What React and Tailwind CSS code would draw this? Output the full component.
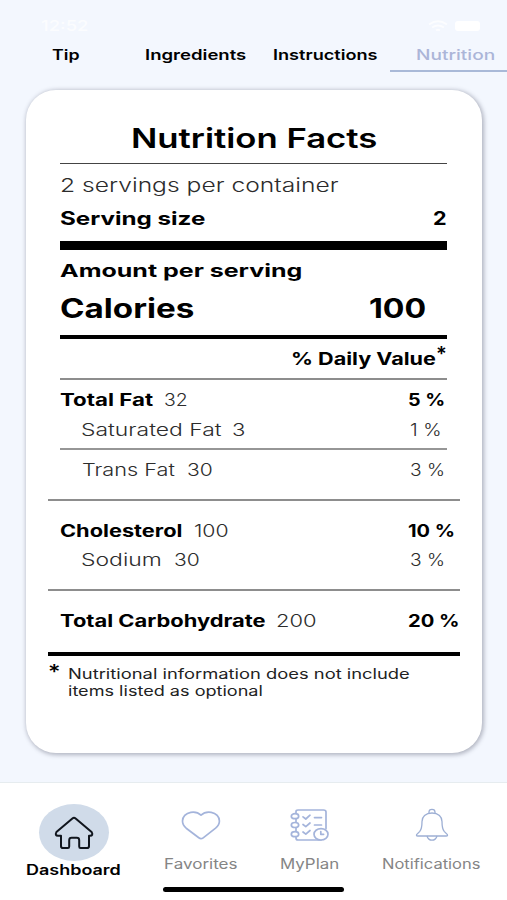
import { useLayoutEffect, useRef, useState } from "react";

// Stretches a single line of text horizontally to fill the width of its box.
function Fit({ children, className = "" }) {
  const box = useRef(null);
  const text = useRef(null);
  const [scale, setScale] = useState(1);
  useLayoutEffect(() => {
    setScale(box.current.clientWidth / text.current.offsetWidth);
  }, [children]);
  return (
    <span ref={box} className={`block shrink-0 whitespace-nowrap ${className}`}>
      <span ref={text} className="inline-block origin-left" style={{ transform: `scaleX(${scale})` }}>
        {children}
      </span>
    </span>
  );
}

function Row({ className, label, amount, value }) {
  return (
    <div className={`ml-[34px] flex w-[410px] text-[17px] ${className}`}>
      <div className="flex w-[347.5px] shrink-0">
        {label}
        {amount}
      </div>
      {value}
    </div>
  );
}

function HomeIcon() {
  return (
    <svg width="40" height="35" viewBox="0 0 40 35" fill="none" stroke="#10151d" strokeWidth="2" strokeLinejoin="round" strokeLinecap="round">
      <path d="M18.4 3.4Q20 2 21.6 3.4L37.6 17.1Q39.6 20.6 36 20.7H35V31.2Q35 33 33 33H26.6Q25.2 33 25.2 31.5V25.2Q25.2 22.8 22.8 22.8H17.6Q15.2 22.8 15.2 25.2V31.5Q15.2 33 13.8 33H9Q7 33 7 31.2V20.7H4Q.6 20.6 2.4 17.1Z" />
    </svg>
  );
}

function HeartIcon() {
  return (
    <svg width="40" height="30" viewBox="0 0 40 30" fill="none" stroke="#a4b4db" strokeWidth="1.7" strokeLinejoin="round">
      <path d="M20 5.2C17.2 2.4 13.4 1.7 9.8 2.3C4.8 3.1 1.5 6.8 1.5 11C1.5 13.8 2.8 16.2 5.2 18.2L17.8 27.8Q20 29.5 22.2 27.8L34.6 18.2C37 16.2 38.4 13.8 38.4 11C38.4 6.8 35.2 3.1 30.2 2.3C26.6 1.7 22.8 2.4 20 5.2Z" />
    </svg>
  );
}

function PlanIcon() {
  return (
    <svg width="40" height="34" viewBox="0 0 40 34" fill="none" stroke="#a4b4db" strokeWidth="1.7" strokeLinecap="round" strokeLinejoin="round">
      <path d="M6 5V3.5Q6 2 8 2H33.5Q36 2 36 4V20.5M6 11V14M6 20V23M6 29V30Q6 32 8 32H31" />
      <ellipse cx="5" cy="8.2" rx="3.7" ry="2.5" />
      <ellipse cx="5" cy="17" rx="3.7" ry="2.5" />
      <ellipse cx="5" cy="26.2" rx="3.7" ry="2.5" />
      <path d="M13 8.8L15.8 11L20 7.2M13 16.5L15.8 18.7L20 15M13 24L15.8 26.2L20 22.5M24.5 9.6H31.5M24.5 17H31.5" />
      <ellipse cx="31" cy="26.3" rx="7" ry="5.7" fill="white" />
      <path d="M30.8 23.6V26.3H33.6" />
    </svg>
  );
}

function BellIcon() {
  return (
    <svg width="34" height="34" viewBox="0 0 34 34" fill="none" stroke="#9dafd4" strokeWidth="1.3" strokeLinejoin="round">
      <path d="M14 5.4V4Q14 1.3 17 1.3Q20 1.3 20 4V5.4" />
      <path d="M17 5C10.5 5 7 8.8 7 13.5C7 18.5 6.6 21.3 4.8 23.4L1.8 26.4Q.8 28 2.8 28H31.2Q33.2 28 32.2 26.4L29.2 23.4C27.4 21.3 27 18.5 27 13.5C27 8.8 23.5 5 17 5Z" />
      <path d="M12 28Q13.2 32.2 17 32.2Q20.8 32.2 22 28" />
    </svg>
  );
}

function NavItem({ icon, children }) {
  return (
    <div className="flex flex-col items-center text-[14px] text-[#858585]">
      <div className="flex h-[72px] items-center pt-[12px]">{icon}</div>
      <div className="leading-[18px]">{children}</div>
    </div>
  );
}

export default function App() {
  return (
    <div className="flex h-[900px] w-[507px] flex-col overflow-hidden bg-[#f3f7fe] font-['Inter','Liberation_Sans',sans-serif] text-black">
      <header className="h-[90px] shrink-0">
        <div className="flex h-[37px] items-end justify-between pr-[27px] pl-[41px] text-white">
          <Fit className="w-[48px] text-[15px] leading-[23px] font-medium text-white/70">12:52</Fit>
          <div className="flex h-[22px] items-center gap-[7px]">
            <svg width="20" height="12" viewBox="0 0 20 12" fill="none" stroke="white" strokeOpacity=".7" strokeWidth="2">
              <path d="M1 4.5Q10-2 19 4.5M4 7.5Q10 3.5 16 7.5M8 10.5Q10 9 12 10.5" />
            </svg>
            <div className="h-[10px] w-[25px] rounded-[3px] bg-white" />
          </div>
        </div>
        <nav className="flex h-[35px] pl-[52px] text-[14.5px] leading-[35px] font-semibold">
          <Fit className="w-[27px]">Tip</Fit>
          <Fit className="ml-[66px] w-[101px]">Ingredients</Fit>
          <Fit className="ml-[27px] w-[105px]">Instructions</Fit>
          <div className="ml-[12px] w-[117px] border-b-2 border-[#a9b9d8] pl-[26px] font-medium text-[#abb5d8]">
            <Fit className="w-[79px]">Nutrition</Fit>
          </div>
        </nav>
      </header>

      <main className="ml-[26px] h-[663px] w-[456px] shrink-0 rounded-[30px] bg-white pt-[21px] shadow-[1px_1px_4px_1px_rgba(60,65,85,0.36)]">
        <div className="ml-[34px] w-[387px]">
          <h1 className="flex h-[52px] justify-center text-[27.5px] leading-[54px] font-semibold">
            <Fit className="w-[246px]">Nutrition Facts</Fit>
          </h1>
          <div className="h-px bg-[#444]" />
          <Fit className="mt-[5px] w-[278px] text-[18.5px] leading-[33px] font-[350] text-[#2c2c2c]">2 servings per container</Fit>
          <div className="flex justify-between text-[18.5px] leading-[32px] font-bold">
            <Fit className="w-[145px]">Serving size</Fit>
            <Fit className="w-[14px]">2</Fit>
          </div>
          <div className="mt-[7px] h-[9px] bg-black" />
          <Fit className="mt-[5px] w-[243px] text-[18px] leading-[32px] font-bold">Amount per serving</Fit>
          <div className="flex h-[41px] justify-between pr-[21px] text-[26.5px] leading-[42px] font-bold">
            <Fit className="w-[134px]">Calories</Fit>
            <Fit className="w-[57px]">100</Fit>
          </div>
          <div className="mt-[7px] h-1 bg-black" />
          <div className="mt-[5px] flex h-[30px] justify-end text-[17px] leading-[31px] font-bold">
            <Fit className="w-[145px]">% Daily Value</Fit>
            <Fit className="w-[11px] text-[20px] leading-[20px] font-semibold">*</Fit>
          </div>
          <div className="mt-1 h-[2px] bg-[#8d8d8d]" />
        </div>

        <Row className="mt-1 h-[31px] leading-[33px]"
          label={<Fit className="w-[93px] font-bold">Total Fat</Fit>}
          amount={<Fit className="ml-[11px] w-[24px] font-[350] text-[#2c2c2c]">32</Fit>}
          value={<Fit className="w-[37px] font-bold">5 %</Fit>} />
        <Row className="leading-[30px] font-[350] text-[#2c2c2c]"
          label={<Fit className="ml-[21px] w-[140px]">Saturated Fat</Fit>}
          amount={<Fit className="ml-[11px] w-[13px]">3</Fit>}
          value={<Fit className="ml-[2px] w-[31px]">1 %</Fit>} />
        <div className="mt-[3px] ml-[34px] h-[2px] w-[387px] bg-[#969696]" />
        <Row className="mt-[5px] leading-[30px] font-[350] text-[#2c2c2c]"
          label={<Fit className="ml-[22px] w-[93px]">Trans Fat</Fit>}
          amount={<Fit className="ml-[12px] w-[26px]">30</Fit>}
          value={<Fit className="ml-[2px] w-[35px]">3 %</Fit>} />
        <div className="mt-[14px] ml-[22px] h-[2px] w-[412px] bg-[#8d8d8d]" />
        <Row className="mt-[14px] h-[30px] leading-[32px]"
          label={<Fit className="w-[123px] font-bold">Cholesterol</Fit>}
          amount={<Fit className="ml-[11px] w-[35px] font-[350] text-[#2c2c2c]">100</Fit>}
          value={<Fit className="w-[47px] font-bold">10 %</Fit>} />
        <Row className="leading-[30px] font-[350] text-[#2c2c2c]"
          label={<Fit className="ml-[21px] w-[81px]">Sodium</Fit>}
          amount={<Fit className="ml-[12px] w-[26px]">30</Fit>}
          value={<Fit className="ml-[2px] w-[35px]">3 %</Fit>} />
        <div className="mt-[14px] ml-[22px] h-[2px] w-[412px] bg-[#8d8d8d]" />
        <Row className="mt-[14px] h-[31px] leading-[33px]"
          label={<Fit className="w-[206px] font-bold">Total Carbohydrate</Fit>}
          amount={<Fit className="ml-[10px] w-[40px] font-[350] text-[#2c2c2c]">200</Fit>}
          value={<Fit className="w-[51px] font-bold">20 %</Fit>} />
        <div className="mt-[16px] ml-[22px] h-1 w-[412px] bg-black" />
        <div className="ml-[22px] flex">
          <Fit className="w-[12px] text-[20px] leading-[32px] font-medium">*</Fit>
          <div className="mt-[9px] ml-[7.5px] text-[14px] leading-[17px] text-[#222]">
            <Fit className="w-[342px]">Nutritional information does not include</Fit>
            <Fit className="w-[195px]">items listed as optional</Fit>
          </div>
        </div>
      </main>

      <footer className="mt-[29px] flex h-[118px] shrink-0 flex-col border-t border-[#e6ecef] bg-white">
        <div className="flex h-[104px] gap-[43px] pl-[26px]">
          <div className="flex flex-col items-center">
            <div className="mt-[21px] flex h-[57px] w-[70px] items-center justify-center rounded-[50%] bg-[#d0dbe9]">
              <HomeIcon />
            </div>
            <Fit className="w-[95px] text-[14px] leading-[18px] font-semibold">Dashboard</Fit>
          </div>
          <NavItem icon={<HeartIcon />}><Fit className="w-[73px]">Favorites</Fit></NavItem>
          <NavItem icon={<PlanIcon />}><Fit className="w-[59px]">MyPlan</Fit></NavItem>
          <NavItem icon={<BellIcon />}><Fit className="w-[99px]">Notifications</Fit></NavItem>
        </div>
        <div className="ml-[163px] h-[5px] w-[181px] rounded-full bg-black" />
      </footer>
    </div>
  );
}
